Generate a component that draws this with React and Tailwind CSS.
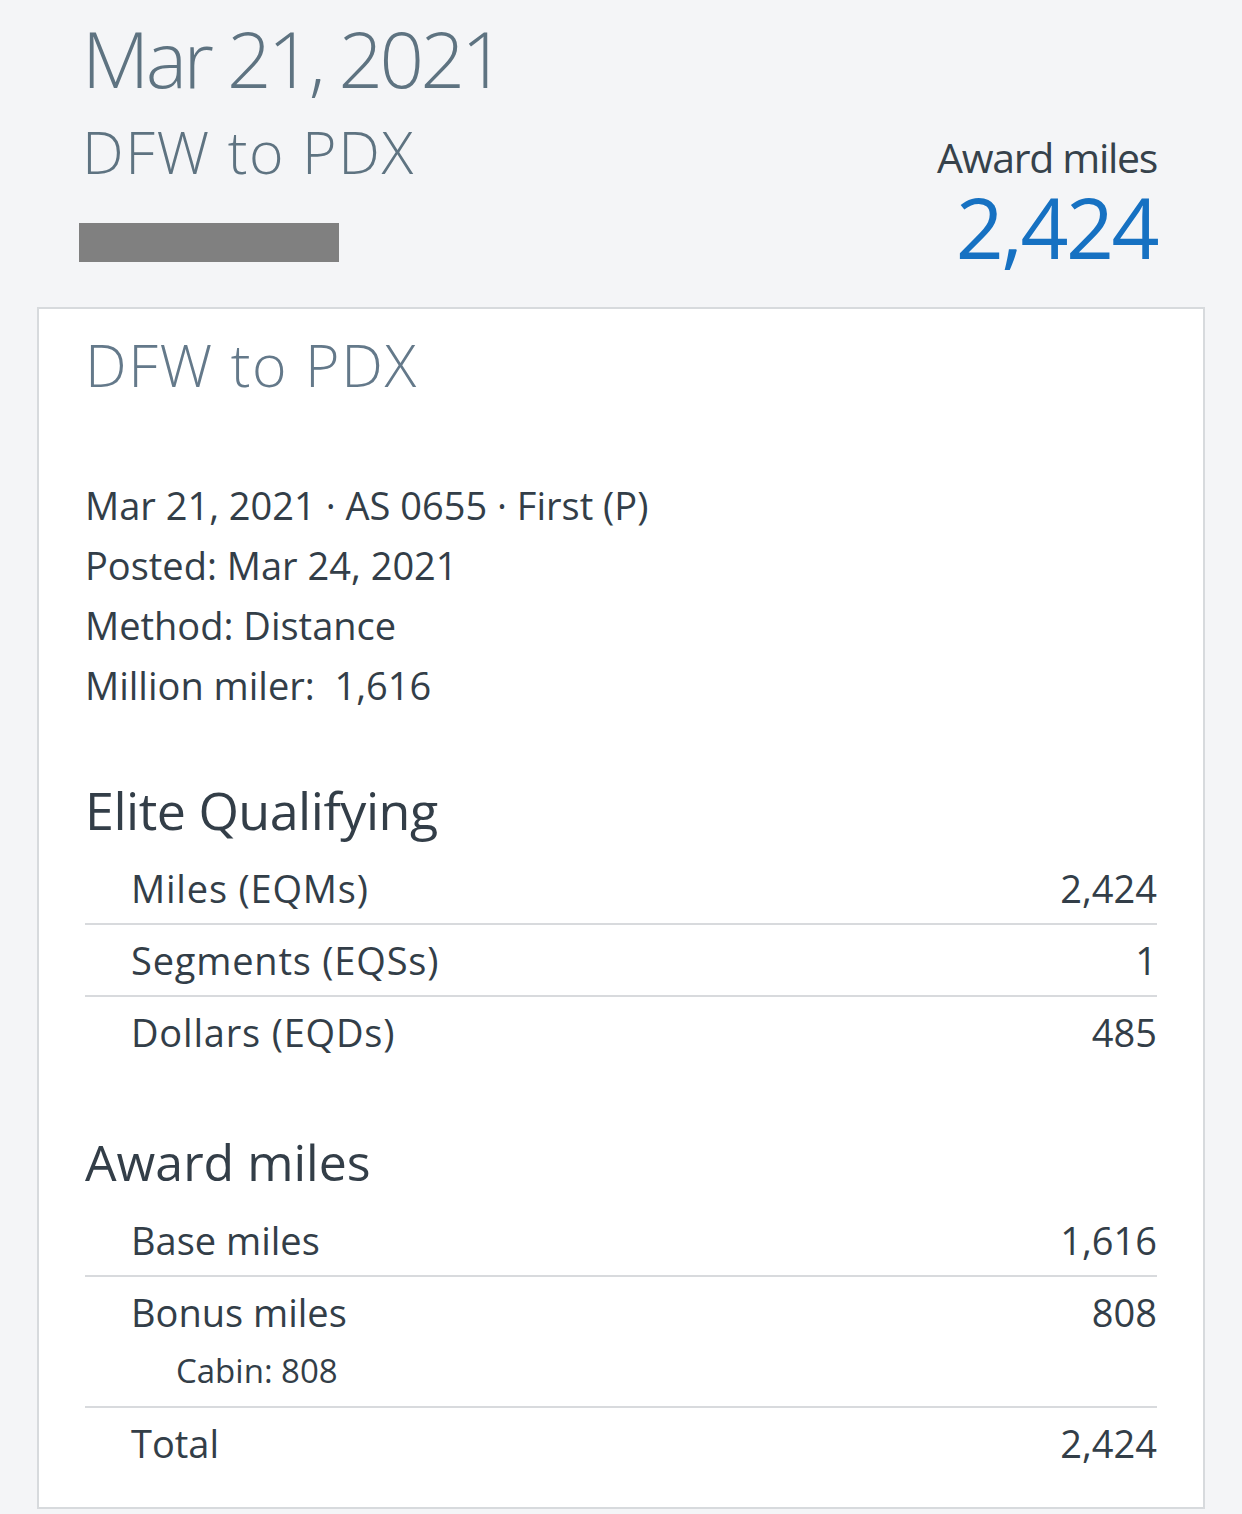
export default function App() {
  const elite = [
    { label: 'Miles (EQMs)', value: '2,424' },
    { label: 'Segments (EQSs)', value: '1' },
    { label: 'Dollars (EQDs)', value: '485' },
  ];

  return (
    <div className="min-h-[1514px] w-[1242px] bg-[#f4f5f7] font-['Open_Sans',sans-serif] text-[#333e48]">
      {/* header */}
      <div className="flex h-[307px] items-start justify-between pl-[79px] pr-[85px]">
        <div className="flex flex-col">
          <div className="mt-[19px] pl-[3px] text-[78px] font-light leading-none tracking-[-3.6px] text-[#5e7381]">
            Mar 21, 2021
          </div>
          <div className="mt-[25px] pl-[3px] text-[59px] font-light leading-none tracking-[1.6px] text-[#5e7381]">
            DFW to PDX
          </div>
          <div className="mt-[42px] h-[39px] w-[260px] bg-[#808080]" />
        </div>
        <div className="flex flex-col items-end pt-[137px]">
          <div className="text-[41px] leading-[41px] tracking-[-1.3px] text-[#36424b]">Award miles</div>
          <div className="mt-[14px] text-[84px] leading-[70px] tracking-[-2.5px] text-[#1671c2]">2,424</div>
        </div>
      </div>

      {/* card */}
      <div className="mx-[37px] border-2 border-[#d7dadd] bg-white px-[46px] pt-[26px] pb-[29px]">
        <div className="text-[59px] font-light leading-none tracking-[1.6px] text-[#64798a]">DFW to PDX</div>

        <div className="mt-[81px] text-[38px] leading-[60px]">
          <div>Mar 21, 2021 · AS 0655 · First (P)</div>
          <div>Posted: Mar 24, 2021</div>
          <div>Method: Distance</div>
          <div>Million miler:&nbsp; 1,616</div>
        </div>

        <div className="mt-[69px] text-[52px] leading-none tracking-[-0.5px]">Elite Qualifying</div>
        <div className="mt-[17px]">
          {elite.map((row, i) => (
            <div
              key={row.label}
              className={`flex h-[72px] justify-between pl-[46px] text-[38px] leading-[70px] ${
                i < elite.length - 1 ? 'border-b-2 border-[#d8dadd]' : ''
              }`}
            >
              <span className="tracking-[0.8px]">{row.label}</span>
              <span>{row.value}</span>
            </div>
          ))}
        </div>

        <div className="mt-[68px] text-[50px] leading-none">Award miles</div>
        <div className="mt-[18px]">
          <div className="flex h-[72px] justify-between border-b-2 border-[#d8dadd] pl-[46px] text-[38px] leading-[70px]">
            <span>Base miles</span>
            <span>1,616</span>
          </div>
          <div className="border-b-2 border-[#d8dadd] pb-[11px] pl-[46px]">
            <div className="flex justify-between text-[38px] leading-[70px]">
              <span>Bonus miles</span>
              <span>808</span>
            </div>
            <div className="pl-[45px] text-[33px] leading-[48px]">Cabin: 808</div>
          </div>
          <div className="flex h-[70px] justify-between pl-[46px] text-[38px] leading-[70px]">
            <span>Total</span>
            <span>2,424</span>
          </div>
        </div>
      </div>
    </div>
  );
}
